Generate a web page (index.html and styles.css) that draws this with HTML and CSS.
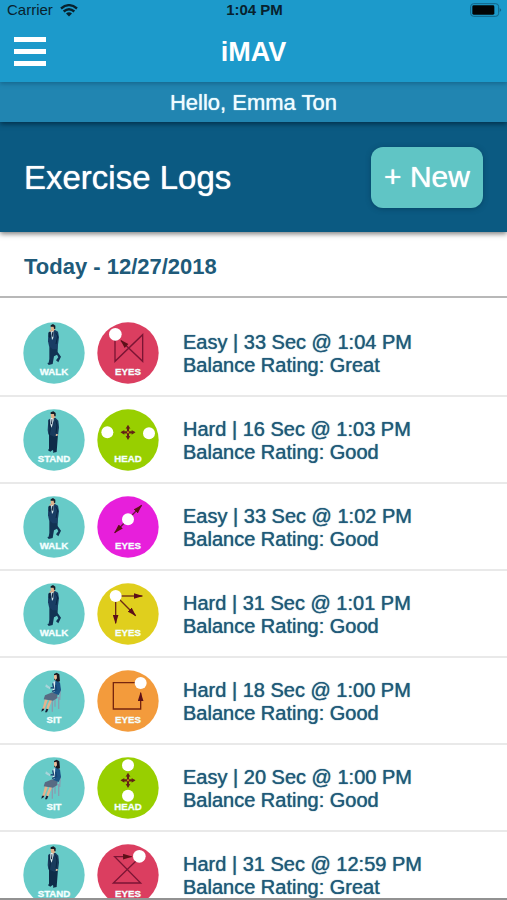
FILE: index.html
```html
<!DOCTYPE html>
<html lang="en">
<head>
<meta charset="utf-8">
<meta name="viewport" content="width=device-width, initial-scale=1">
<title>iMAV</title>
<link rel="stylesheet" href="styles.css">
</head>
<body>
<svg class="defs" aria-hidden="true">
  <defs>
    <marker id="tip" viewBox="0 0 26 16" refX="24" refY="8" markerWidth="28" markerHeight="18" markerUnits="userSpaceOnUse" orient="auto-start-reverse"><path d="M0 0 26 8 0 16z" fill="#5d1018"/></marker>
    <symbol id="walk" viewBox="0 0 186 186">
      <circle cx="93" cy="93" r="92" fill="#67cbc8"/>
      <path d="M79 72 79 99Q80 110 77 122L73 123 77 129 89 126 93 103 102 98 106 106 99 115 106 121 114 104 104 90 104 70z" fill="#123353"/>
      <path d="M76 33 83 26 95 23 105 29 108 46 106 61 103 82 89 82 78 72 75 58z" fill="#193d64"/>
      <path d="M84 28 91 25 91 48 87 54z" fill="#d8eef1"/>
      <path d="M88 29 91 31 89 46 86 42z" fill="#14243d"/>
      <path d="M77 31 81 29 84 43 81 49 77 44z" fill="#0d263f"/>
      <path d="M98 32 104 42 99 66" fill="none" stroke="#0a2744" stroke-width="3"/>
      <path d="M83 14 94 13 96 22 91 29 84 25z" fill="#dfb08a"/>
      <path d="M83 10 90 6 97 11 97 20 93 21 92 14 83 14z" fill="#171b25"/>
      <path d="M80 24 85 23 85 29 80 29z" fill="#e2b18b"/>
      <text class="badge-text" x="93" y="160">WALK</text>
    </symbol>
    <symbol id="stand" viewBox="0 0 186 186">
      <circle cx="93" cy="93" r="92" fill="#67cbc8"/>
      <path d="M78 70 78 119 75 124 82 128 89 123 91 126 90 131 101 129 105 76z" fill="#0e2c49"/>
      <path d="M76 32 86 26 98 27 106 35 108 55 105 79 94 83 76 76 74 63z" fill="#193b5d"/>
      <path d="M82 28 91 24 92 33 86 56 82 47z" fill="#e2f1f2"/>
      <path d="M86 30 88 31 87 47 84 43z" fill="#16233b"/>
      <path d="M78 34 82 58 79 78M98 34 102 48 99 72" fill="none" stroke="#0a2743" stroke-width="3"/>
      <path d="M83 15 94 14 97 23 91 30 84 25z" fill="#dfb08a"/>
      <path d="M83 10 91 7 98 12 98 22 94 22 93 15 83 15z" fill="#171b25"/>
      <path d="M99 75 105 76 103 81 98 80z" fill="#e5c1a0"/>
      <text class="badge-text" x="93" y="160">STAND</text>
    </symbol>
    <symbol id="sit" viewBox="0 0 186 186">
      <circle cx="93" cy="93" r="92" fill="#67cbc8"/>
      <path d="M88 90 88 125M107 83 107 117M83 83 112 83M112 56 110 90M96 85 96 110" fill="none" stroke="#899cb0" stroke-width="4"/>
      <path d="M67 84 61 107 57 119 64 119 74 91M80 89 72 108 69 121 75 121 87 91" fill="#e6b28c"/>
      <path d="M57 116 55 125 62 121 64 116zM70 116 66 127 72 127 76 118z" fill="#17233a"/>
      <path d="M88 67 104 73 102 85 90 92 62 88 66 76z" fill="#586b83"/>
      <path d="M91 36 101 31 111 38 114 60 107 75 91 69z" fill="#1c5487"/>
      <path d="M91 35 97 33 95 65 89 63z" fill="#dceef1"/>
      <path d="M98 45 101 59 87 64M89 40 92 54 77 53" fill="none" stroke="#184574" stroke-width="4"/>
      <path d="M69 43 84 53 80 58 67 50z" fill="#a8d5da"/>
      <path d="M93 12 101 8 109 13 111 34 105 35 94 30z" fill="#191820"/>
      <path d="M93 16 101 14 102 25 97 30 93 25z" fill="#eabc9a"/>
      <text class="badge-text" x="93" y="160">SIT</text>
    </symbol>
    <symbol id="compass" viewBox="0 0 44 44">
      <path d="M22 0 29 12 25 11 25 19 33 19 32 15 44 22 32 29 33 25 25 25 25 33 29 32 22 44 15 32 19 33 19 25 11 25 12 29 0 22 12 15 11 19 19 19 19 11 15 12z" fill="#622315"/>
      <circle cx="22" cy="22" r="3" fill="#c98a1c"/>
    </symbol>
  </defs>
</svg>

<header class="topbar">
  <div class="status">
    <span class="carrier">Carrier
      <svg class="wifi" viewBox="0 0 54 38" aria-hidden="true"><path d="M3 13Q27-7 51 13" fill="none" stroke="#08222e" stroke-width="7"/><path d="M11 22Q27 8 43 22" fill="none" stroke="#08222e" stroke-width="7"/><path d="M18 28Q27 20 36 28L27 37z" fill="#08222e"/></svg>
    </span>
    <span class="clock">1:04 PM</span>
    <svg class="battery" viewBox="0 0 96 42" aria-hidden="true"><rect x="2" y="2" width="84" height="38" rx="9" fill="none" stroke="#126488" stroke-width="3"/><rect x="7" y="7" width="66" height="28" rx="4" fill="#020405"/><path d="M89 15Q98 21 89 27z" fill="#126488"/></svg>
  </div>
  <div class="nav">
    <button class="menu" aria-label="Menu"><span></span><span></span><span></span></button>
    <h1>iMAV</h1>
  </div>
</header>
<p class="greeting">Hello, Emma Ton</p>
<section class="heading">
  <h2>Exercise Logs</h2>
  <button class="new">+ New</button>
</section>
<main class="logs">
  <h3>Today - 12/27/2018</h3>
  <ul>
    <li>
      <svg class="badge"><use href="#walk"/></svg>
      <svg class="badge" viewBox="0 0 186 186"><circle cx="93" cy="93" r="92" fill="#db3e60"/><path d="M54 50V118L137 38V118L72 56" fill="none" stroke="#7b1534" stroke-width="4"/><path d="M70 53 94 66 83 78z" fill="#5d1018"/><circle cx="55" cy="37" r="19" fill="#fff"/><text class="badge-text" x="93" y="160">EYES</text></svg>
      <p>Easy | 33 Sec @ 1:04 PM<br>Balance Rating: Great</p>
    </li>
    <li>
      <svg class="badge"><use href="#stand"/></svg>
      <svg class="badge" viewBox="0 0 186 186"><circle cx="93" cy="93" r="92" fill="#98cf00"/><use href="#compass" x="70" y="47" width="46" height="46"/><circle cx="31" cy="70" r="18" fill="#fff"/><circle cx="156" cy="73" r="18" fill="#fff"/><text class="badge-text" x="93" y="160">HEAD</text></svg>
      <p>Hard | 16 Sec @ 1:03 PM<br>Balance Rating: Good</p>
    </li>
    <li>
      <svg class="badge"><use href="#walk"/></svg>
      <svg class="badge" viewBox="0 0 186 186"><circle cx="93" cy="93" r="92" fill="#e71fdb"/><path d="M53 110 134 28" stroke="#6d123f" stroke-width="4" marker-start="url(#tip)" marker-end="url(#tip)"/><circle cx="93" cy="70" r="18" fill="#fff"/><text class="badge-text" x="93" y="160">EYES</text></svg>
      <p>Easy | 33 Sec @ 1:02 PM<br>Balance Rating: Good</p>
    </li>
    <li>
      <svg class="badge"><use href="#walk"/></svg>
      <svg class="badge" viewBox="0 0 186 186"><circle cx="93" cy="93" r="92" fill="#e0cf1d"/><g stroke="#6c2b16" stroke-width="4"><path d="M58 39H136" marker-end="url(#tip)"/><path d="M56 39V121" marker-end="url(#tip)"/><path d="M58 40 116 98" marker-end="url(#tip)"/></g><circle cx="56" cy="39" r="18" fill="#fff"/><text class="badge-text" x="93" y="160">EYES</text></svg>
      <p>Hard | 31 Sec @ 1:01 PM<br>Balance Rating: Good</p>
    </li>
    <li>
      <svg class="badge"><use href="#sit"/></svg>
      <svg class="badge" viewBox="0 0 186 186"><circle cx="93" cy="93" r="92" fill="#f39b3c"/><path d="M120 38H49V117H131V68" fill="none" stroke="#76250e" stroke-width="4" marker-end="url(#tip)"/><circle cx="131" cy="39" r="18" fill="#fff"/><text class="badge-text" x="93" y="160">EYES</text></svg>
      <p>Hard | 18 Sec @ 1:00 PM<br>Balance Rating: Good</p>
    </li>
    <li>
      <svg class="badge"><use href="#sit"/></svg>
      <svg class="badge" viewBox="0 0 186 186"><circle cx="93" cy="93" r="92" fill="#98cf00"/><use href="#compass" x="70" y="47" width="46" height="46"/><circle cx="93" cy="25" r="18" fill="#fff"/><circle cx="93" cy="116" r="18" fill="#fff"/><text class="badge-text" x="93" y="160">HEAD</text></svg>
      <p>Easy | 20 Sec @ 1:00 PM<br>Balance Rating: Good</p>
    </li>
    <li>
      <svg class="badge"><use href="#stand"/></svg>
      <svg class="badge" viewBox="0 0 186 186"><circle cx="93" cy="93" r="92" fill="#db3e60"/><path d="M120 48 49 117H131L53 38H104" fill="none" stroke="#7b1534" stroke-width="4" marker-end="url(#tip)"/><circle cx="127" cy="37" r="19" fill="#fff"/><text class="badge-text" x="93" y="160">EYES</text></svg>
      <p>Hard | 31 Sec @ 12:59 PM<br>Balance Rating: Great</p>
    </li>
  </ul>
</main>
</body>
</html>
```
FILE: styles.css
```css
* {
  box-sizing: border-box;
  margin: 0;
  padding: 0;
}

body {
  height: 100vh;
  display: flex;
  flex-direction: column;
  overflow: hidden;
  border-bottom: 2px solid #929292;
  background: #fff;
  color: #205a79;
  font-family: "Liberation Sans", Arial, sans-serif;
}

.defs {
  position: absolute;
  width: 0;
  height: 0;
}

button {
  border: 0;
  color: #fff;
  font-family: inherit;
  cursor: pointer;
}

.topbar {
  flex: none;
  background: #1c9acb;
  box-shadow: 0 2px 4px #0b4e7080;
  z-index: 3;
}

.status {
  display: grid;
  grid-template-columns: 1fr auto 1fr;
  align-items: center;
  height: 20px;
  padding: 0 5px 0 7px;
  color: #08222e;
  font-size: 15px;
  line-height: 20px;
}

.carrier {
  display: flex;
  align-items: center;
  gap: 7px;
}

.wifi {
  width: 18px;
  height: 13px;
}

.clock {
  font-weight: bold;
}

.battery {
  justify-self: end;
  width: 32px;
  height: 14px;
}

.nav {
  display: grid;
  grid-template-columns: 1fr auto 1fr;
  align-items: center;
  height: 62px;
  padding: 0 14px;
}

.menu {
  display: flex;
  flex-direction: column;
  gap: 7px;
  width: 32px;
  background: none;
}

.menu span {
  height: 5px;
  background: #fff;
}

h1 {
  padding-top: 2px;
  color: #fff;
  font-size: 27px;
  line-height: 32px;
}

.greeting {
  flex: none;
  height: 40px;
  padding: 0 20px;
  background: #2185b1;
  box-shadow: 0 2px 5px #02304a;
  color: #effcff;
  font-size: 22px;
  line-height: 42px;
  text-align: center;
  text-shadow: 0 0 1px;
  z-index: 2;
}

.heading {
  flex: none;
  display: flex;
  align-items: center;
  justify-content: space-between;
  height: 110px;
  padding: 0 24px;
  background: #0b5a82;
  box-shadow: 0 2px 5px #00000080;
  color: #fff;
  z-index: 1;
}

h2 {
  padding-top: 2px;
  font-size: 33px;
  font-weight: normal;
  text-shadow: 0 0 1px;
}

.new {
  width: 112px;
  height: 61px;
  border-radius: 12px;
  background: #60c5c5;
  box-shadow: 0 1px 5px #02304a80;
  font-size: 30px;
  text-shadow: 0 0 1px;
}

.logs {
  flex: 1;
  min-height: 0;
  overflow: hidden;
}

h3 {
  height: 66px;
  padding: 0 24px;
  border-bottom: 2px solid #b8b8b8;
  font-size: 22px;
  line-height: 70px;
}

ul {
  padding-top: 12px;
  list-style: none;
}

li {
  display: flex;
  align-items: center;
  height: 87px;
  padding: 0 23px;
  border-bottom: 2px solid #e9e9e9;
}

.badge {
  flex: none;
  width: 62px;
  height: 62px;
  margin-right: 12px;
}

.badge-text {
  fill: #f4ffff;
  stroke: #f4ffff;
  stroke-width: 1px;
  font-size: 29px;
  font-weight: bold;
  text-anchor: middle;
}

li p {
  padding-top: 2px;
  margin-left: 12px;
  font-size: 20px;
  line-height: 23px;
  text-shadow: 0 0 1px;
}
```
